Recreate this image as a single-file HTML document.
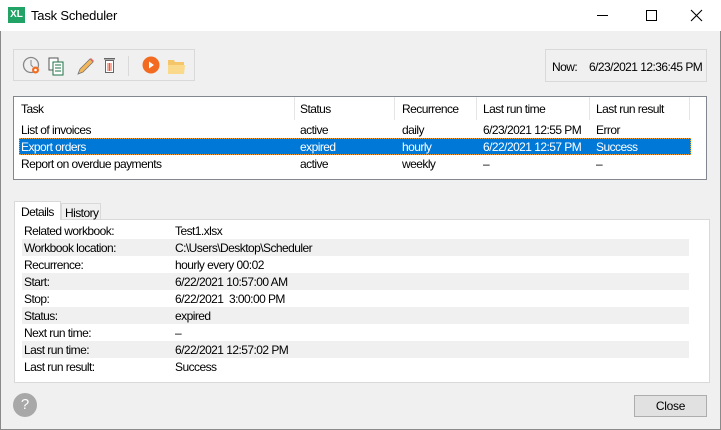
<!DOCTYPE html>
<html><head><meta charset="utf-8"><style>
*{margin:0;padding:0;box-sizing:border-box}
body{width:721px;height:430px;background:#f0f0f0;font-family:"Liberation Sans",sans-serif;font-size:12px;color:#000;position:relative;overflow:hidden}
.abs{position:absolute}
.win{position:absolute;left:0;top:0;width:721px;height:430px;border:1px solid #8a8a8a}
.title{position:absolute;left:0;top:0;width:721px;height:31px;background:#fff}
.t{position:absolute;white-space:nowrap;letter-spacing:-0.55px}
.hdr{border-right:1px solid #e5e5e5;height:23px;top:97px}
.stripe{position:absolute;left:22px;width:667px;height:17px;background:#f0f0f0}
</style></head><body>
<div class="win"></div>
<div class="title"></div>
<div class="abs" style="left:8px;top:7px;width:17px;height:16px;background:#21a366;color:#fff;font-weight:bold;font-size:10px;line-height:16px;text-align:center">XL</div>
<div class="t" style="left:31px;top:8px;font-size:13px;letter-spacing:-0.2px">Task Scheduler</div>
<div class="abs" style="left:597px;top:15px;width:11px;height:1px;background:#000"></div>
<div class="abs" style="left:646px;top:10px;width:11px;height:11px;border:1px solid #000"></div>
<svg class="abs" style="left:690px;top:9px" width="13" height="13"><path d="M1 1L12 12M12 1L1 12" stroke="#000" stroke-width="1.1"/></svg>

<div class="abs" style="left:13px;top:49px;width:182px;height:32px;border:1px solid #d9d9d9"></div>
<svg class="abs" style="left:21px;top:55px" width="170" height="22">
 <circle cx="10" cy="10" r="7.5" fill="none" stroke="#888" stroke-width="1.3"/><path d="M10 5V10L12 12" stroke="#888" fill="none"/><circle cx="14.5" cy="15" r="3.5" fill="#f26b21"/><circle cx="14.5" cy="15" r="1.3" fill="#fff"/>
 <rect x="28" y="3" width="9" height="12" fill="#fff" stroke="#555"/><rect x="32" y="7" width="10" height="13" fill="#fff" stroke="#1e7145"/><path d="M34 10h6M34 13h6M34 16h6" stroke="#1e7145"/>
 <path d="M57 19L59 14L69 4L72 7L62 17Z" fill="#f5b65a" stroke="#777" stroke-width=".8"/><path d="M69 4L72 7L73 6L70 3Z" fill="#e66"/>
 <rect x="83" y="3" width="11" height="1.5" fill="#666"/><rect x="84.5" y="5.5" width="8" height="12" fill="#fff" stroke="#666"/><path d="M87 8v8M88.5 8v8M90 8v8" stroke="#e53"/>
 <rect x="107" y="1" width="1" height="20" fill="#d9d9d9"/>
 <circle cx="130" cy="10" r="8.5" fill="#f26b21"/><path d="M128 6.5L133 10L128 13.5Z" fill="#fff"/>
 <path d="M147 5h6l1 2h9v12h-16Z" fill="#f5c56a"/><path d="M147 10h17l-1 9h-16Z" fill="#fad98a"/>
</svg>

<div class="abs" style="left:545px;top:49px;width:162px;height:33px;border:1px solid #d9d9d9"></div>
<div class="t" style="left:552px;top:60px">Now:</div>
<div class="t" style="left:589px;top:60px">6/23/2021 12:36:45 PM</div>

<div class="abs" style="left:13px;top:96px;width:694px;height:84px;background:#fff;border:1px solid #828790"></div>
<div class="abs hdr" style="left:14px;width:281px"></div>
<div class="abs hdr" style="left:295px;width:100px"></div>
<div class="abs hdr" style="left:395px;width:82px"></div>
<div class="abs hdr" style="left:477px;width:113px"></div>
<div class="abs hdr" style="left:590px;width:100px"></div>
<div class="t" style="left:21px;top:102px">Task</div>
<div class="t" style="left:300px;top:102px">Status</div>
<div class="t" style="left:402px;top:102px">Recurrence</div>
<div class="t" style="left:483px;top:102px">Last run time</div>
<div class="t" style="left:596px;top:102px">Last run result</div>

<div class="t" style="left:21px;top:123px">List of invoices</div>
<div class="t" style="left:300px;top:123px">active</div>
<div class="t" style="left:402px;top:123px">daily</div>
<div class="t" style="left:483px;top:123px">6/23/2021 12:55 PM</div>
<div class="t" style="left:596px;top:123px">Error</div>

<div class="abs" style="left:19px;top:138px;width:672px;height:17px;background:#0078d7;border:1px dotted #f0a030"></div>
<div class="t" style="left:21px;top:140px;color:#fff">Export orders</div>
<div class="t" style="left:300px;top:140px;color:#fff">expired</div>
<div class="t" style="left:402px;top:140px;color:#fff">hourly</div>
<div class="t" style="left:483px;top:140px;color:#fff">6/22/2021 12:57 PM</div>
<div class="t" style="left:596px;top:140px;color:#fff">Success</div>

<div class="t" style="left:21px;top:157px">Report on overdue payments</div>
<div class="t" style="left:300px;top:157px">active</div>
<div class="t" style="left:402px;top:157px">weekly</div>
<div class="t" style="left:483px;top:157px">–</div>
<div class="t" style="left:596px;top:157px">–</div>

<div class="abs" style="left:14px;top:219px;width:696px;height:164px;background:#fff;border:1px solid #d9d9d9"></div>
<div class="abs" style="left:14px;top:201px;width:47px;height:19px;background:#fff;border:1px solid #d9d9d9;border-bottom:none"></div>
<div class="t" style="left:21px;top:205px">Details</div>
<div class="abs" style="left:61px;top:203px;width:40px;height:16px;background:#f0f0f0;border:1px solid #d9d9d9;border-bottom:none"></div>
<div class="t" style="left:65px;top:206px">History</div>

<div class="stripe" style="top:239px"></div>
<div class="stripe" style="top:273px"></div>
<div class="stripe" style="top:307px"></div>
<div class="stripe" style="top:341px"></div>

<div class="t" style="left:24px;top:224px">Related workbook:</div><div class="t" style="left:175px;top:224px">Test1.xlsx</div>
<div class="t" style="left:24px;top:241px">Workbook location:</div><div class="t" style="left:175px;top:241px">C:\Users\Desktop\Scheduler</div>
<div class="t" style="left:24px;top:258px">Recurrence:</div><div class="t" style="left:175px;top:258px">hourly every 00:02</div>
<div class="t" style="left:24px;top:275px">Start:</div><div class="t" style="left:175px;top:275px">6/22/2021 10:57:00 AM</div>
<div class="t" style="left:24px;top:292px">Stop:</div><div class="t" style="left:175px;top:292px">6/22/2021&nbsp; 3:00:00 PM</div>
<div class="t" style="left:24px;top:309px">Status:</div><div class="t" style="left:175px;top:309px">expired</div>
<div class="t" style="left:24px;top:326px">Next run time:</div><div class="t" style="left:175px;top:326px">–</div>
<div class="t" style="left:24px;top:343px">Last run time:</div><div class="t" style="left:175px;top:343px">6/22/2021 12:57:02 PM</div>
<div class="t" style="left:24px;top:360px">Last run result:</div><div class="t" style="left:175px;top:360px">Success</div>

<div class="abs" style="left:13px;top:393px;width:24px;height:24px;border-radius:50%;background:#a8a8a8;color:#fff;font-size:15px;text-align:center;line-height:24px">?</div>
<div class="abs" style="left:634px;top:395px;width:73px;height:22px;background:#e1e1e1;border:1px solid #adadad;text-align:center;line-height:20px;letter-spacing:-0.3px">Close</div>
</body></html>
